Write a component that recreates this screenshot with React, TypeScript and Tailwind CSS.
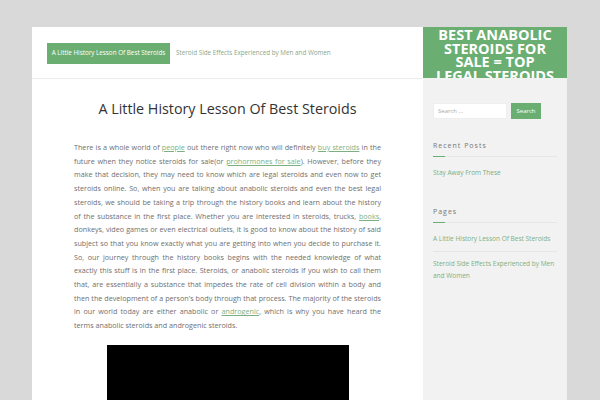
import React from "react";

const green = "bg-[#6aae72]";

function Link({ children }: { children: React.ReactNode }) {
  return <span className="text-[#7cb083] underline">{children}</span>;
}

export default function App() {
  return (
    <div
      className="w-[600px] h-[400px] overflow-hidden bg-[#d9d9d9] flex items-start pt-[27px] pl-[32px]"
      style={{ fontFamily: '"Open Sans", "Liberation Sans", sans-serif' }}
    >
      <main className="w-[391px] h-[373px] bg-white flex flex-col">
        <nav className="h-[52px] shrink-0 border-b border-[#ececec] flex items-center pl-[15px] gap-[6px] pt-[1px]">
          <span className={`${green} text-white text-[6.3px] whitespace-nowrap h-[21px] w-[123px] flex items-center justify-center`}>
            A Little History Lesson Of Best Steroids
          </span>
          <span className="text-[6.3px] whitespace-nowrap text-[#8aa88d]">
            Steroid Side Effects Experienced by Men and Women
          </span>
        </nav>
        <article className="px-[42px] pt-[20px]">
          <h1 className="text-center text-[14.3px] leading-[20px] text-[#333]">
            A Little History Lesson Of Best Steroids
          </h1>
          <p className="mt-[22px] text-[7.2px] leading-[13.7px] text-[#6f6f6f] text-justify">
            There is a whole world of <Link>people</Link> out there right now who will definitely{" "}
            <Link>buy steroids</Link> in the future when they notice steroids for sale(or{" "}
            <Link>prohormones for sale</Link>). However, before they make that decision, they may need
            to know which are legal steroids and even now to get steroids online. So, when you are
            talking about anabolic steroids and even the best legal steroids, we should be taking a
            trip through the history books and learn about the history of the substance in the first
            place. Whether you are interested in steroids, trucks, <Link>books</Link>, donkeys, video
            games or even electrical outlets, it is good to know about the history of said subject so
            that you know exactly what you are getting into when you decide to purchase it. So, our
            journey through the history books begins with the needed knowledge of what exactly this
            stuff is in the first place. Steroids, or anabolic steroids if you wish to call them that,
            are essentially a substance that impedes the rate of cell division within a body and then
            the development of a person's body through that process. The majority of the steroids in
            our world today are either anabolic or <Link>androgenic</Link>, which is why you have heard
            the terms anabolic steroids and androgenic steroids.
          </p>
          <div className="mt-[12px] ml-[33px] w-[242px] h-[80px] bg-black" />
        </article>
      </main>
      <aside className="w-[144px] h-[373px] bg-[#f2f2f2] flex flex-col">
        <div className={`${green} h-[51px] shrink-0 overflow-hidden text-white text-center font-bold uppercase text-[14.5px] leading-[13.7px] px-[10px] pt-[1px]`}>
          Best Anabolic Steroids For Sale = Top Legal Steroids
        </div>
        <div className="px-[10px] pt-[25px]">
          <div className="flex gap-[4px]">
            <div className="w-[74px] h-[16px] bg-white border border-[#eee] text-[6px] text-[#aaa] flex items-center pl-[4px]">
              Search …
            </div>
            <div className={`${green} w-[30px] h-[16px] text-white text-[6px] flex items-center justify-center`}>
              Search
            </div>
          </div>
          <h3 className="mt-[22px] text-[7px] tracking-[1px] text-[#777]">Recent Posts</h3>
          <div className="mt-[4px] h-[1px] bg-[#e6e6e6] flex">
            <div className="w-[12px] h-[1px] bg-[#6aae72]" />
          </div>
          <div className="mt-[11px] text-[6.5px] text-[#7cb083]">Stay Away From These</div>
          <h3 className="mt-[30px] text-[7px] tracking-[1px] text-[#777]">Pages</h3>
          <div className="mt-[4px] h-[1px] bg-[#e6e6e6] flex">
            <div className="w-[12px] h-[1px] bg-[#6aae72]" />
          </div>
          <div className="mt-[11px] text-[6.5px] text-[#7cb083] pb-[7px] border-b border-[#e6e6e6]">
            A Little History Lesson Of Best Steroids
          </div>
          <div className="mt-[6px] text-[6.5px] leading-[12.5px] text-[#7cb083]">
            Steroid Side Effects Experienced by Men and Women
          </div>
        </div>
      </aside>
    </div>
  );
}
